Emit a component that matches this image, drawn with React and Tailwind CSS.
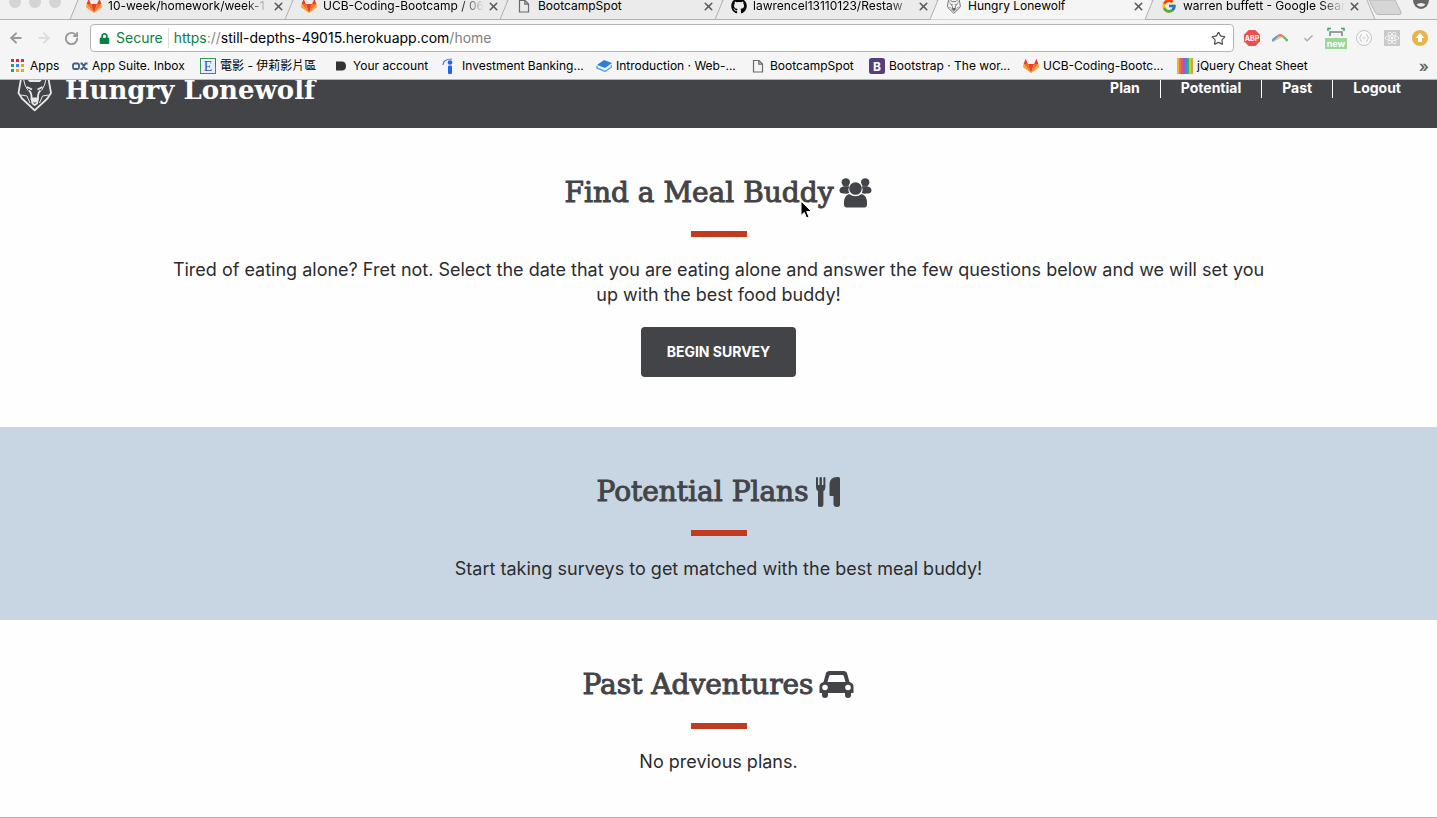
import React from "react";
import { FaGithub, FaLock, FaReact } from "react-icons/fa";
import { FcGoogle } from "react-icons/fc";
import { Star, ArrowLeft, ArrowRight, RotateCw, X, Check } from "lucide-react";

function Fox({ size = 16 }) {
  return (
    <svg width={size} height={size} viewBox="0 0 16 16" className="shrink-0">
      <path fill="#e24329" d="M8 15 4.9 6h6.2z" />
      <path fill="#fc6d26" d="M8 15 .6 6h4.3zM8 15 15.4 6h-4.3z" />
      <path fill="#fca326" d="M.6 6 0 9.2 8 15zM15.4 6l.6 3.2L8 15z" />
      <path fill="#e24329" d="M.6 6 2.6.8 4.9 6zM15.4 6l-2-5.200L11.100 6z" />
    </svg>
  );
}

function Doc() {
  return (
    <svg width="16" height="16" viewBox="0 0 16 16" className="shrink-0" fill="none" stroke="#6a6a6a" strokeWidth="1.2">
      <path d="M3.500 2.500h5.500l3.500 3.500v8h-9zM8.800 2.500V6.200h3.700" />
    </svg>
  );
}

function Wolf({ className, color, width, strokeWidth }) {
  return (
    <svg viewBox="0 0 36 40" width={width} className={className} fill="none" stroke={color} strokeWidth={strokeWidth} strokeLinejoin="round">
      <path d="M5 1 1.500 21 5 26.500 17.700 38.300 30.400 26.500 34 21 30.500 1 22.500 9H13z" />
      <path d="M6.500 7 8 13 11 18.500M29 7 27.500 13 24.500 18.500" strokeWidth="1" />
      <path d="M10 15 15 17.500M25.500 15 20.500 17.500" />
      <path d="M12 18.500Q15 21 14.500 27L15.500 31.500 17.700 33 20 31.500 21 27Q20.500 21 23.500 18.500" />
      <path d="M4 23 10 24 13 31M31.500 23 25.500 24 22.500 31" strokeWidth="1" />
      <path d="M15 26.500h5.500L19 29.500h-2.500z" fill={color} />
    </svg>
  );
}

const tabs = [
  { icon: <Fox />, label: "10-week/homework/week-1" },
  { icon: <Fox />, label: "UCB-Coding-Bootcamp / 06" },
  { icon: <Doc />, label: "BootcampSpot" },
  { icon: <FaGithub size={16} className="shrink-0" />, label: "lawrencel13110123/Restaw" },
  { icon: <Wolf width={16} color="#555555" strokeWidth={2} className="h-4 shrink-0" />, label: "Hungry Lonewolf", active: true },
  { icon: <FcGoogle size={16} className="shrink-0" />, label: "warren buffett - Google Sear" },
];

function TabBar() {
  return (
    <div className="flex h-5 items-start overflow-hidden bg-[#f1f1f1] pl-2 shadow-[inset_0_-1px_0_#b4b4b4]">
      <div className="flex w-[62px] shrink-0 gap-2 pl-px">
        {["close", "minimise", "zoom"].map((n) => (
          <span key={n} className="-mt-1 size-3 rounded-full bg-[#d4d4d4]" />
        ))}
      </div>
      {tabs.map((t) => (
        <div key={t.label} className="relative flex h-5 w-[215px] shrink-0">
          <svg width="231" height="20" viewBox="0 0 231 20" className="absolute left-0 top-0">
            <path d="M0 19.500 8 0H222L230 19.500z" fill={t.active ? "#f5f5f5" : "#ebebeb"} />
            <path d={t.active ? "M0 19.500 8 0M222 0 230 19.500" : "M0 19.500 8 0M222 0 230 19.500M0 19.500H230"} fill="none" stroke="#b0b0b0" />
          </svg>
          <div className="relative flex h-3 w-full min-w-0 items-center pl-4">
            {t.icon}
            <span
              className={
                t.label.length > 20
                  ? "ml-1.5 w-[162px] whitespace-nowrap text-xs leading-5 [mask-image:linear-gradient(to_right,black_85%,transparent)]"
                  : "ml-1.5 w-[162px] whitespace-nowrap text-xs leading-5"
              }
            >
              {t.label}
            </span>
            <button aria-label={"Close " + t.label} className="ml-[3px] shrink-0">
              <X size={13} strokeWidth={3} className="text-[#5c5c5c]" />
            </button>
          </div>
        </div>
      ))}
      <button aria-label="New tab" className="relative ml-2 shrink-0">
        <svg width="36" height="16" viewBox="0 0 36 16">
          <path d="M1 0H27L33 12Q34 14.500 31 14.500H11Q8 14.500 7 12z" fill="#d6d6d6" stroke="#b8b8b8" />
        </svg>
      </button>
      <button aria-label="Profile" className="relative ml-auto mr-2 shrink-0">
        <svg width="16" height="10" viewBox="0 0 16 10">
          <path d="M0 0H16A8 9 0 0 1 0 0z" fill="#666666" />
          <path d="M3.500 4.500Q8 1.500 12.500 4.500Q8 9 3.500 4.500z" fill="#f1f1f1" />
        </svg>
      </button>
    </div>
  );
}

function Extensions() {
  return (
    <div className="flex items-center gap-3">
      <button aria-label="Adblock Plus">
        <svg width="16" height="16" viewBox="0 0 16 16">
          <path d="M4.700 0h6.600L16 4.700v6.600L11.300 16H4.700L0 11.300V4.700z" fill="#e8504c" />
          <text x="8" y="10.500" textAnchor="middle" fontSize="7" fontWeight="700" fill="white">ABP</text>
        </svg>
      </button>
      <button aria-label="Rainbow">
        <svg width="16" height="16" viewBox="0 0 16 16" fill="none" strokeWidth="2.500">
          <path d="M0 11Q3 8 6 6" stroke="#55a6dd" />
          <path d="M6 6Q8 4.500 11 6.500" stroke="#ef7a63" />
          <path d="M11 6.500Q14 8.500 15.500 11" stroke="#69b978" />
          <path d="M1 11.500Q6 8.500 9 7" stroke="#e6b266" strokeWidth="1" />
        </svg>
      </button>
      <button aria-label="Checker" className="flex w-4 justify-center">
        <Check size={11} strokeWidth={3} className="text-[#aaaaaa]" />
      </button>
      <button aria-label="Capture, new" className="-mx-1">
        <svg width="24" height="22" viewBox="0 0 24 22">
          <path d="M4 4V1.500H7M17 1.500H20V4" fill="none" stroke="#3fa467" strokeWidth="1.500" />
          <path d="M6 9V5H18V9" fill="none" stroke="#808080" strokeWidth="1.500" />
          <rect x="1" y="11" width="22" height="11" fill="#99d79b" />
          <text x="12" y="19.500" textAnchor="middle" fontSize="9" fontWeight="700" fill="white">new</text>
        </svg>
      </button>
      <button aria-label="JSON viewer">
        <svg width="16" height="16" viewBox="0 0 16 16" fill="none" stroke="#c4c4c4">
          <circle cx="8" cy="8" r="7.500" fill="#f8f8f8" />
          <path d="M6 4.500Q4.500 4.500 4.500 6.500L3.500 8l1 1.500Q4.500 11.500 6 11.500M10 4.500Q11.500 4.500 11.500 6.500l1 1.500-1 1.500Q11.500 11.500 10 11.500M6.500 8h3" />
        </svg>
      </button>
      <button aria-label="React tools" className="flex size-4 items-center justify-center bg-[#c9c9c9] text-white">
        <FaReact size={14} />
      </button>
      <button aria-label="Update">
        <svg width="16" height="16" viewBox="0 0 16 16">
          <circle cx="8" cy="8" r="8" fill="#e9b44c" />
          <path d="M8 3 12.500 8H10v4H6V8H3.500z" fill="white" />
        </svg>
      </button>
    </div>
  );
}

function AddressBar() {
  return (
    <div className="flex h-9 items-center px-2">
      <div className="flex w-[82px] shrink-0 items-center gap-3">
        <button aria-label="Back"><ArrowLeft size={16} strokeWidth={3} className="text-[#999999]" /></button>
        <button aria-label="Forward"><ArrowRight size={16} strokeWidth={3} className="text-[#dddddd]" /></button>
        <button aria-label="Reload"><RotateCw size={15} strokeWidth={3} className="text-[#999999]" /></button>
      </div>
      <div className="flex h-7 grow items-center rounded-sm border border-[#b4b4b4] bg-white px-2 text-sm leading-5">
        <FaLock size={11} className="mr-1.5 text-[#0b8043]" />
        <span className="text-[#0b8043]">Secure</span>
        <span className="mx-[5px] h-5 w-px bg-[#dddddd]" />
        <span className="grow whitespace-nowrap">
          <span className="text-[#0b8043]">https</span>
          <span className="text-[#888888]">://</span>still-depths-49015.herokuapp.com
          <span className="text-[#808080]">/home</span>
        </span>
        <button aria-label="Bookmark this page" className="-mr-px"><Star size={15} className="text-[#555555]" /></button>
      </div>
      <div className="ml-2.5 shrink-0 pr-px"><Extensions /></div>
    </div>
  );
}

const appColors = ["#e02b2b", "#e02b2b", "#e02b2b", "#22a565", "#3b82f6", "#f0a323", "#22a565", "#f0a323", "#f0a323"];

const bookmarks = [
  {
    label: "Apps", width: "w-[62px]",
    icon: (
      <svg width="16" height="16" viewBox="0 0 16 16">
        {appColors.map((c, i) => (
          <rect key={i} x={1 + (i % 3) * 5} y={1 + Math.floor(i / 3) * 5} width="3" height="3" fill={c} />
        ))}
      </svg>
    ),
  },
  {
    label: "App Suite. Inbox", width: "w-32",
    icon: (
      <svg width="16" height="16" viewBox="0 0 16 16" fill="none" stroke="#3e5f8a" strokeWidth="1.800">
        <rect x="1" y="5.500" width="6" height="5.500" rx="1.500" />
        <path d="M8.500 5.500H10L13.500 11H15.500M8.500 11H10L13.500 5.500H15.500" />
      </svg>
    ),
  },
  {
    label: "電影 - 伊莉影片區", width: "w-[133px]",
    icon: (
      <svg width="16" height="16" viewBox="0 0 16 16">
        <rect x=".5" y=".5" width="15" height="15" fill="#e8eefb" stroke="#3d5fc4" />
        <path d="M.5 15.500V.5H15.500" fill="none" stroke="#389a55" />
        <path d="M15.500 8V15.500H.5" fill="none" stroke="#c64d4d" />
        <text x="8" y="13" textAnchor="middle" fontSize="14" fill="#3b4fc0" className="font-['Liberation_Serif']">E</text>
      </svg>
    ),
  },
  {
    label: "Your account", width: "w-[109px]",
    icon: (
      <svg width="16" height="16" viewBox="0 0 16 16"><path d="M3 3.500H9.500Q13 4 13 8T9.500 12.500H3z" fill="#333333" /></svg>
    ),
  },
  {
    label: "Investment Banking...", width: "w-[154px]",
    icon: (
      <svg width="16" height="16" viewBox="0 0 16 16">
        <path d="M1 7Q1 1 10 1" fill="none" stroke="#3478e5" strokeWidth="1.200" />
        <circle cx="8" cy="4.500" r="2.300" fill="#2164f3" />
        <rect x="6" y="7.500" width="4" height="8.500" rx="1" fill="#2164f3" />
      </svg>
    ),
  },
  {
    label: "Introduction · Web-...", width: "w-[154px]",
    icon: (
      <svg width="16" height="16" viewBox="0 0 16 16">
        <path d="M1 7 8 2l8 3-7 5z" fill="#2e7de0" />
        <path d="M1 8v2l8 3.500L15.500 9V7" fill="none" stroke="#5aa2ef" strokeWidth="1.500" />
      </svg>
    ),
  },
  { label: "BootcampSpot", width: "w-[119px]", icon: <Doc /> },
  {
    label: "Bootstrap · The wor...", width: "w-[154px]",
    icon: (
      <svg width="16" height="16" viewBox="0 0 16 16">
        <rect width="16" height="16" rx="2.500" fill="#563d7c" />
        <text x="8" y="12.500" textAnchor="middle" fontSize="12" fontWeight="700" fill="white">B</text>
      </svg>
    ),
  },
  { label: "UCB-Coding-Bootc...", width: "w-[154px]", icon: <Fox /> },
  {
    label: "jQuery Cheat Sheet", width: "w-36",
    icon: (
      <svg width="16" height="16" viewBox="0 0 16 16">
        {["#e5b82e", "#ee6f4d", "#e04f8e", "#8b63c9", "#3f8fd8", "#35b56b", "#c5cf3a", "#e89b32"].map((c, i) => (
          <rect key={c} x={i * 2} width="2" height="16" fill={c} />
        ))}
      </svg>
    ),
  },
];

function Bookmarks() {
  return (
    <nav aria-label="Bookmarks" className="flex h-6 items-center border-b border-[#b4b4b4] pb-[3px] pl-2.5 pr-2 text-xs leading-4">
      {bookmarks.map((b) => (
        <a key={b.label} href="#bookmark" className={"flex shrink-0 items-center gap-1 whitespace-nowrap " + b.width}>
          <span className="shrink-0">{b.icon}</span>
          {b.label}
        </a>
      ))}
      <button aria-label="More bookmarks" className="ml-auto text-base font-semibold leading-4 text-[#666666]">»</button>
    </nav>
  );
}

function SiteHeader() {
  return (
    <header className="flex h-12 justify-between overflow-hidden bg-[#434448] px-4 text-white">
      <a href="#home" className="flex items-start gap-3">
        <Wolf width={36} color="#e8e8e8" strokeWidth={1.8} className="-mt-2 ml-px h-10" />
        <span className="-mt-2 font-['DejaVu_Serif',serif] text-[26px] font-bold leading-9">Hungry Lonewolf</span>
      </a>
      <nav aria-label="Site" className="flex h-[18px] divide-x divide-white text-sm font-bold leading-4">
        {["Plan", "Potential", "Past", "Logout"].map((l) => (
          <a key={l} href={"#" + l.toLowerCase()} className="px-5">{l}</a>
        ))}
      </nav>
    </header>
  );
}

function Section({ title, icon, className, children }) {
  return (
    <section className={"px-4 pt-[45px] text-center text-[#2c2c2e] " + className}>
      <h2 className="flex items-center justify-center gap-1.5 font-['DejaVu_Serif',serif] text-[28px] leading-10 text-[#434448] [-webkit-text-stroke:1px_#434448]">
        {title}
        {icon}
      </h2>
      <hr className="mx-auto mt-[18px] h-1.5 w-14 border-0 bg-[#c03b22]" />
      <div className="mx-auto mt-5 max-w-[1100px] text-lg leading-[25px]">{children}</div>
    </section>
  );
}

const Users = () => (
  <svg width="33" height="32" viewBox="0 0 34 32" fill="#434448" className="shrink-0">
    <circle cx="7" cy="5" r="4.300" />
    <circle cx="27" cy="5" r="4.300" />
    <path d="M5 9h5.500A8 8 0 0 0 10.500 16Q8 17 6 16.500Q.500 17 .500 13.500T5 9zM29 9H23.500A8 8 0 0 1 23.500 16Q26 17 28 16.500Q33.500 17 33.500 13.500T29 9z" />
    <circle cx="17" cy="11.300" r="6.500" />
    <path d="M10.500 17Q17 21.500 23.500 17Q29 18.500 29 27Q29 31 25 31H9Q5 31 5 27Q5 18.500 10.500 17z" />
  </svg>
);

const Cutlery = () => (
  <svg width="26" height="32" viewBox="0 0 26 32" fill="#434448" className="shrink-0">
    <path d="M1 2q0-1 1-1t1 1v7h1.500V2q0-1 1.200-1t1.200 1v7h1.500V2q0-1 1-1t1 1v9q0 3-2 4v13.500q0 2.500-3 2.500T3 28.500V15Q1 14 1 11z" />
    <path d="M25 2.500V28.500Q25 31 22 31T18.500 28.500V20H15.500Q14.500 20 14.500 19V8Q15 1 22 1h1.500Q25 1 25 2.500z" />
  </svg>
);

const CarIcon = () => (
  <svg width="35" height="28" viewBox="0 0 35 28" className="shrink-0">
    <path d="M10.500 0H24.500Q27.500 0 28.200 2.800L30.500 11Q34.500 12 34.500 15.500V22H32V24Q32 27 29 27T26 24V22H9V24Q9 27 6 27T3 24V22H.500V15.500Q.500 12 4.500 11L6.800 2.800Q7.500 0 10.500 0zM11.500 4Q10.500 4 10.200 5L8.500 11H26.500L24.800 5Q24.500 4 23.500 4z" fill="#434448" fillRule="evenodd" />
    <circle cx="6" cy="16.500" r="2.800" fill="#fefefe" />
    <circle cx="29" cy="16.500" r="2.800" fill="#fefefe" />
  </svg>
);

const Cursor = () => (
  <svg width="14" height="20" viewBox="0 0 14 20" aria-hidden="true" className="absolute left-[800px] top-[200px]">
    <path d="M1 1V15.500L4.300 12.500 6.500 18 9 17 6.700 11.500H11.500z" fill="black" stroke="white" />
  </svg>
);

export default function App() {
  return (
    <div className="relative min-h-screen bg-[#fefefe] font-['Inter','Noto_Sans_CJK_TC',sans-serif]">
      <div className="bg-[#f5f5f5] text-black">
        <TabBar />
        <AddressBar />
        <Bookmarks />
      </div>
      <SiteHeader />
      <main>
        <Section title="Find a Meal Buddy" icon={<Users />} className="pb-[50px]">
          <p>
            Tired of eating alone? Fret not. Select the date that you are eating alone and answer the few questions below and we will set you up with the best food buddy!
          </p>
          <button className="mt-5 h-[50px] rounded bg-[#434448] px-[26px] text-sm font-bold text-white">BEGIN SURVEY</button>
        </Section>
        <Section title="Potential Plans" icon={<Cutlery />} className="bg-[#c8d6e3] pb-[39px]">
          <p>Start taking surveys to get matched with the best meal buddy!</p>
        </Section>
        <Section title="Past Adventures" icon={<CarIcon />} className="border-b border-[#b4b4b4] pb-[43px]">
          <p>No previous plans.</p>
        </Section>
      </main>
      <Cursor />
    </div>
  );
}
